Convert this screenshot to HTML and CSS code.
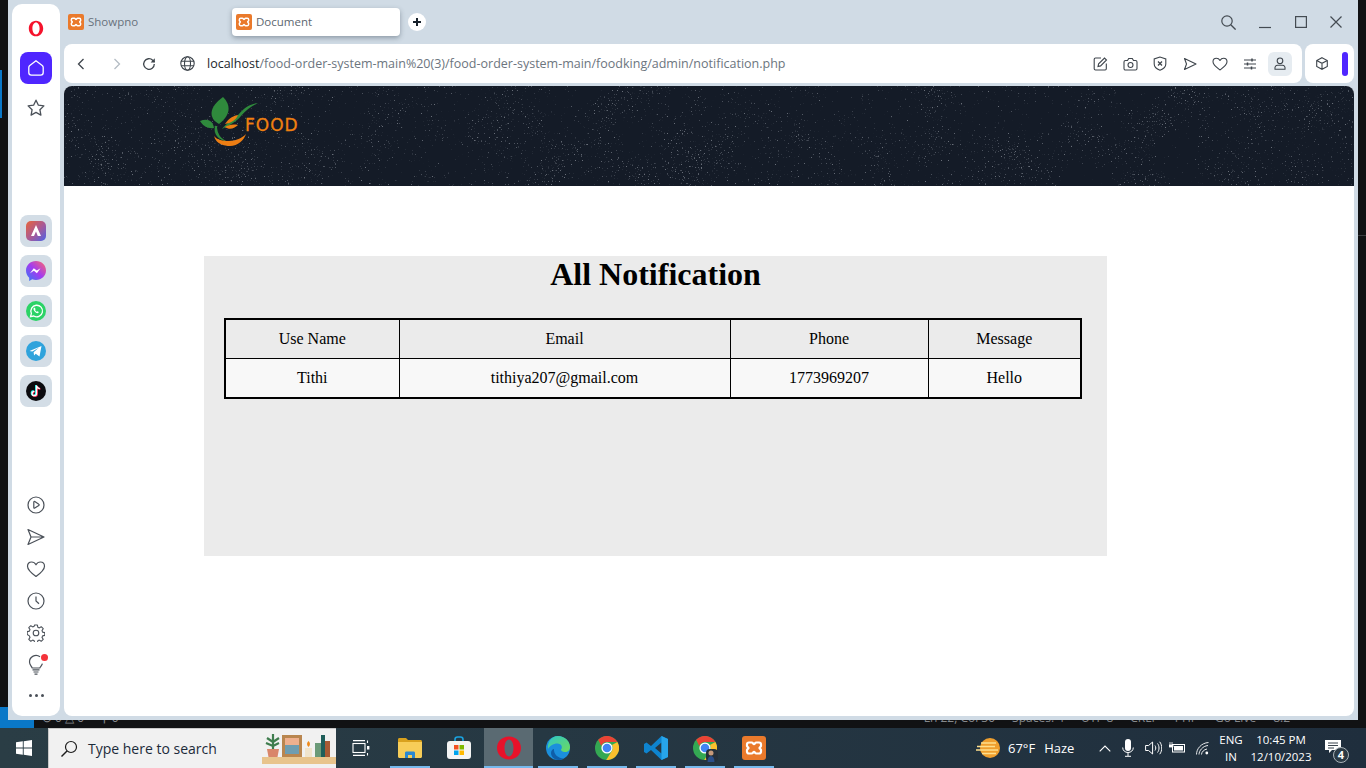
FILE: index.html
```html
<!DOCTYPE html>
<html lang="en">
<head>
    <meta charset="UTF-8">
    <meta name="viewport" content="width=device-width, initial-scale=1.0">
    <title>Document</title>
    <link rel="stylesheet" href="styles.css">
</head>
<body>
    <svg class="defs" width="0" height="0">
        <symbol id="xampp" viewBox="0 0 24 24">
            <rect width="24" height="24" rx="3" fill="#ea7a2c"/>
            <path d="M7 6.500h2.600c1.400 0 1.600 1.600 2.400 1.600s1-1.600 2.400-1.600H17c1.200 0 2 .8 2 2v1.400c0 1.100-1.500 1.300-1.500 2.100s1.500 1 1.500 2.100v1.400c0 1.200-.8 2-2 2h-2.600c-1.400 0-1.600-1.600-2.400-1.600s-1 1.600-2.400 1.600H7c-1.200 0-2-.8-2-2v-1.400c0-1.100 1.500-1.300 1.500-2.100S5 11 5 9.900V8.500c0-1.200.8-2 2-2z" fill="none" stroke="#fff" stroke-width="2.200"/>
        </symbol>
        <symbol id="chrome" viewBox="0 0 24 24">
            <circle cx="12" cy="12" r="12" fill="#34a853"/>
            <path d="M3.200 3.800A12 12 0 0 1 22.400 6H12a6 6 0 0 0-5.700 4z" fill="#ea4335"/>
            <path d="M22.400 6A12 12 0 0 1 11.200 24l5.300-8.500A6 6 0 0 0 17 9z" fill="#fbc02d"/>
            <circle cx="12" cy="12" r="5.600" fill="#fff"/>
            <circle cx="12" cy="12" r="4.300" fill="#4285f4"/>
        </symbol>
        <filter id="speckle" x="0" y="0" width="100%" height="100%">
            <feTurbulence type="fractalNoise" baseFrequency="0.7" numOctaves="2" seed="7" result="fine"/>
            <feTurbulence type="fractalNoise" baseFrequency="0.02" numOctaves="2" seed="3" result="patch"/>
            <feComposite in="fine" in2="patch" operator="arithmetic" k1="0.5" k2="0.7" k3="0" k4="0"/>
            <feColorMatrix type="matrix" values="0 0 0 0 0.78  0 0 0 0 0.82  0 0 0 0 0.88  8 0 0 0 -4.8"/>
        </filter>
    </svg>

    <div class="desktop">
        <div class="edge edge-left"></div>

        <div class="browser">
            <aside class="sidebar">
                <div class="side-item">
                    <svg width="16" height="17" viewBox="0 0 24 26"><path fill-rule="evenodd" d="M12 1C5.500 1 1 6.500 1 13s4.500 12 11 12 11-5.500 11-12S18.500 1 12 1zm0 3c3 0 5.500 4 5.500 9s-2.500 9-5.500 9-5.500-4-5.500-9S9 4 12 4z" fill="#f5132c"/></svg>
                </div>
                <div class="side-item side-home">
                    <svg width="18" height="18" viewBox="0 0 18 18"><path d="M9 1.800 2.800 6.400c-.8.600-1 1-1 2v5.200c0 1.700 1 2.600 2.600 2.600h9.200c1.600 0 2.600-.9 2.600-2.600V8.400c0-1-.2-1.400-1-2z" fill="none" stroke="#fff" stroke-width="1.300"/></svg>
                </div>
                <div class="side-item">
                    <svg width="20" height="20" viewBox="0 0 20 20"><path d="M10 2.200l2.400 5 5.500.7-4 3.800 1 5.400-4.900-2.700-4.900 2.700 1-5.400-4-3.800 5.500-.7z" fill="none" stroke="#4a5058" stroke-width="1.300" stroke-linejoin="round"/></svg>
                </div>

                <div class="side-apps">
                    <div class="app-tile">
                        <svg width="20" height="20" viewBox="0 0 20 20"><defs><linearGradient id="aria" x1="0" y1="0" x2="1" y2="1"><stop offset="0" stop-color="#e8643a"/><stop offset=".55" stop-color="#a65a9a"/><stop offset="1" stop-color="#4a63e8"/></linearGradient></defs><rect width="20" height="20" rx="5" fill="url(#aria)"/><path d="M10 4 5 15h3l2-4.500 1.800 4.500H15z" fill="#fff"/></svg>
                    </div>
                    <div class="app-tile">
                        <svg width="20" height="20" viewBox="0 0 20 20"><defs><linearGradient id="msgr" x1="0" y1="1" x2="1" y2="0"><stop offset="0" stop-color="#2f7bf6"/><stop offset=".5" stop-color="#a33bf0"/><stop offset="1" stop-color="#ff6a6a"/></linearGradient></defs><path d="M10 0C4.400 0 0 4.100 0 9.600c0 2.900 1.200 5.400 3.200 7.100V20l3-1.700c1.200.4 2.500.6 3.800.6 5.600 0 10-4 10-9.400S15.600 0 10 0z" fill="url(#msgr)"/><path d="m4 12.300 3.800-5.100 3 2.400 3.700-2.400-3.600 5-3-2.400z" fill="#fff"/></svg>
                    </div>
                    <div class="app-tile">
                        <svg width="20" height="20" viewBox="0 0 20 20"><circle cx="10" cy="10" r="10" fill="#2bd366"/><path d="M4.500 15.600l.9-3.200A5.800 5.800 0 1 1 7.700 15z" fill="none" stroke="#fff" stroke-width="1.300"/><path d="M8 6.800c-.8.600-.7 2 .5 3.500s2.700 2.300 3.700 1.800l.6-1-1.400-.9-.6.500c-.7-.2-1.500-1.100-1.700-1.800l.5-.6-.7-1.500z" fill="#fff"/></svg>
                    </div>
                    <div class="app-tile">
                        <svg width="20" height="20" viewBox="0 0 20 20"><circle cx="10" cy="10" r="10" fill="#2fa3dc"/><path d="M3.500 10 15.500 5l-2 10.500-3.800-2.800-1.600 1.800-.5-3.200 5.200-4.500-6.500 3.800z" fill="#fff"/></svg>
                    </div>
                    <div class="app-tile">
                        <svg width="20" height="20" viewBox="0 0 20 20"><circle cx="10" cy="10" r="10" fill="#0b0b0f"/><path d="M10.500 4.500v8a2.200 2.200 0 1 1-2.200-2.200M10.500 4.500c.2 1.800 1.500 3 3.300 3.100" fill="none" stroke="#25f4ee" stroke-width="1.700" transform="translate(-.6 -.4)"/><path d="M10.500 4.500v8a2.200 2.200 0 1 1-2.200-2.200M10.500 4.500c.2 1.800 1.500 3 3.300 3.100" fill="none" stroke="#fe2c55" stroke-width="1.700" transform="translate(.6 .4)"/><path d="M10.500 4.500v8a2.200 2.200 0 1 1-2.200-2.200M10.500 4.500c.2 1.800 1.500 3 3.300 3.100" fill="none" stroke="#fff" stroke-width="1.300"/></svg>
                    </div>
                </div>

                <div class="side-tools">
                    <div class="tool">
                        <svg width="18" height="18" viewBox="0 0 18 18"><circle cx="9" cy="9" r="8" fill="none" stroke="#4a5058" stroke-width="1.200"/><path d="M6.800 6.200c0-.6.500-.9 1-.6l4 2.600c.5.300.5 1 0 1.300l-4 2.600c-.5.300-1 0-1-.6z" fill="none" stroke="#4a5058" stroke-width="1.200"/></svg>
                    </div>
                    <div class="tool">
                        <svg width="20" height="18" viewBox="0 0 20 18"><path d="M2 1.500 18 9 2 16.500 5 9zM5 9h13" fill="none" stroke="#4a5058" stroke-width="1.200" stroke-linejoin="round"/></svg>
                    </div>
                    <div class="tool">
                        <svg width="20" height="18" viewBox="0 0 20 18"><path d="M10 16.500C5 12.800 1.500 10 1.500 6.200 1.500 3.600 3.400 2 5.600 2 7.400 2 9 3 10 4.800 11 3 12.600 2 14.400 2c2.200 0 4.100 1.600 4.100 4.200 0 3.800-3.500 6.600-8.500 10.300z" fill="none" stroke="#4a5058" stroke-width="1.200" stroke-linejoin="round"/></svg>
                    </div>
                    <div class="tool">
                        <svg width="18" height="18" viewBox="0 0 18 18"><circle cx="9" cy="9" r="8" fill="none" stroke="#4a5058" stroke-width="1.200"/><path d="M9 4.500V9l3 2.800" fill="none" stroke="#4a5058" stroke-width="1.200"/></svg>
                    </div>
                    <div class="tool">
                        <svg width="18" height="18" viewBox="0 0 18 18"><path d="M7.600 1h2.800l.4 2.200 1.500.7 1.900-1.200 2 2-1.200 1.900.6 1.500 2.200.5v2.800l-2.200.5-.6 1.500 1.200 1.900-2 2-1.900-1.200-1.500.7-.4 2.200H7.600l-.4-2.200-1.500-.7-1.900 1.200-2-2 1.200-1.900-.6-1.500L.2 10.400V7.600l2.200-.5.600-1.500-1.200-1.900 2-2 1.900 1.200 1.500-.7z" fill="none" stroke="#4a5058" stroke-width="1.100" stroke-linejoin="round"/><circle cx="9" cy="9" r="2.800" fill="none" stroke="#4a5058" stroke-width="1.100"/></svg>
                    </div>
                    <div class="tool tool-tip">
                        <svg width="18" height="22" viewBox="0 0 18 22"><path d="M13 2.800A6.500 6.500 0 0 0 2.500 8c0 2.700 1.800 4 2.700 6h7.600c.7-1.400 2.200-2.600 2.600-4.300M5.500 15.800h7M6.500 18h5M7.500 20.200h3" fill="none" stroke="#4a5058" stroke-width="1.200"/></svg>
                        <span class="tip-dot"></span>
                    </div>
                    <div class="tool tool-dots"><span></span><span></span><span></span></div>
                </div>
            </aside>

            <div class="main">
                <div class="tabbar">
                    <div class="tab">
                        <svg width="16" height="16"><use href="#xampp"/></svg>
                        <span>Showpno</span>
                    </div>
                    <div class="tab tab-active">
                        <svg width="16" height="16"><use href="#xampp"/></svg>
                        <span>Document</span>
                    </div>
                    <div class="tab-add">
                        <svg width="10" height="10" viewBox="0 0 10 10"><path d="M5 1v8M1 5h8" stroke="#16202a" stroke-width="2"/></svg>
                    </div>
                    <div class="win-controls">
                        <svg width="15" height="15" viewBox="0 0 15 15"><circle cx="6" cy="6" r="5.200" fill="none" stroke="#444b52" stroke-width="1.200"/><path d="m9.800 9.800 4.800 4.800" stroke="#444b52" stroke-width="1.300"/></svg>
                        <svg width="12" height="14" viewBox="0 0 12 14"><path d="M0 12.500h12" stroke="#444b52" stroke-width="1.200"/></svg>
                        <svg width="12" height="12" viewBox="0 0 12 12"><rect x=".6" y=".6" width="10.800" height="10.800" fill="none" stroke="#444b52" stroke-width="1.200"/></svg>
                        <svg width="12" height="12" viewBox="0 0 12 12"><path d="m.5.500 11 11m0-11-11 11" stroke="#444b52" stroke-width="1.200"/></svg>
                    </div>
                </div>

                <div class="toolbar">
                    <div class="addressbar">
                        <svg class="nav-back" width="8" height="12" viewBox="0 0 8 12"><path d="M6.500 1 1.500 6l5 5" fill="none" stroke="#3e454c" stroke-width="1.300"/></svg>
                        <svg class="nav-forward" width="8" height="12" viewBox="0 0 8 12"><path d="m1.500 1 5 5-5 5" fill="none" stroke="#b4bcc4" stroke-width="1.300"/></svg>
                        <svg class="nav-reload" width="14" height="14" viewBox="0 0 14 14"><path d="M12.300 7A5.300 5.300 0 1 1 10.700 3.200L12.500 5" fill="none" stroke="#3e454c" stroke-width="1.300"/><path d="M12.800 1.200v4.200H8.600z" fill="#3e454c"/></svg>
                        <svg class="nav-globe" width="15" height="15" viewBox="0 0 15 15"><circle cx="7.500" cy="7.500" r="6.700" fill="none" stroke="#3e454c" stroke-width="1.100"/><ellipse cx="7.500" cy="7.500" rx="3" ry="6.700" fill="none" stroke="#3e454c" stroke-width="1.100"/><path d="M1 5.300h13M1 9.700h13" stroke="#3e454c" stroke-width="1.100"/></svg>
                        <div class="url"><span class="url-host">localhost</span>/food-order-system-main%20(3)/food-order-system-main/foodking/admin/notification.php</div>
                        <div class="bar-icons">
                            <div class="bar-icon"><svg width="15" height="15" viewBox="0 0 15 15"><path d="M8 2H2.500C1.700 2 1.200 2.500 1.200 3.200v9.600c0 .8.500 1.200 1.300 1.200h9.600c.7 0 1.200-.5 1.200-1.200V7.500" fill="none" stroke="#3e454c" stroke-width="1.100"/><path d="m5 10.500.6-2.600L11.500 2l2 2-5.900 5.900z" fill="none" stroke="#3e454c" stroke-width="1.100"/></svg></div>
                            <div class="bar-icon"><svg width="15" height="14" viewBox="0 0 15 14"><path d="M1 5c0-1 .6-1.500 1.500-1.500h2L5.700 1.500h3.600l1.200 2h2c.9 0 1.500.5 1.500 1.500v6.500c0 1-.6 1.500-1.500 1.500h-10C1.600 13 1 12.500 1 11.500z" fill="none" stroke="#3e454c" stroke-width="1.100"/><circle cx="7.500" cy="8" r="2.500" fill="none" stroke="#3e454c" stroke-width="1.100"/></svg></div>
                            <div class="bar-icon"><svg width="14" height="15" viewBox="0 0 14 15"><path d="M7 1 1.200 3v5c0 3 2.500 5 5.800 6.200C10.300 13 12.800 11 12.800 8V3z" fill="none" stroke="#3e454c" stroke-width="1.100"/><path d="m5 5.500 4 4m0-4-4 4" stroke="#3e454c" stroke-width="1.300"/></svg></div>
                            <div class="bar-icon"><svg width="14" height="14" viewBox="0 0 14 14"><path d="M1.500 1.500 13 7 1.500 12.500 3.500 7z" fill="none" stroke="#3e454c" stroke-width="1.100" stroke-linejoin="round"/></svg></div>
                            <div class="bar-icon"><svg width="16" height="14" viewBox="0 0 16 14"><path d="M8 13C4 10 1 8 1 4.800 1 2.600 2.600 1.200 4.400 1.200 5.800 1.200 7.200 2 8 3.400 8.800 2 10.200 1.200 11.600 1.200 13.400 1.200 15 2.600 15 4.800 15 8 12 10 8 13z" fill="none" stroke="#3e454c" stroke-width="1.100" stroke-linejoin="round"/></svg></div>
                            <div class="bar-icon"><svg width="14" height="12" viewBox="0 0 14 12"><path d="M1 2h12M1 6h12M1 10h12" stroke="#3e454c" stroke-width="1.100"/><path d="M9 .5v3M4.500 4.500v3M8.500 8.500v3" stroke="#3e454c" stroke-width="1.500"/></svg></div>
                            <div class="bar-icon bar-profile"><svg width="12" height="13" viewBox="0 0 12 13"><circle cx="6" cy="3.800" r="2.800" fill="none" stroke="#3e454c" stroke-width="1.100"/><path d="M1 12.300c-.4-2.700.8-4 2.600-4h4.800c1.800 0 3 1.300 2.600 4z" fill="none" stroke="#3e454c" stroke-width="1.100"/></svg></div>
                        </div>
                    </div>
                    <div class="extbar">
                        <svg width="12" height="13" viewBox="0 0 12 13"><path d="M6 .7 11.300 3.500v6L6 12.300.7 9.500v-6zM.7 3.500 6 6.300l5.300-2.800M6 6.300v6" fill="none" stroke="#3e454c" stroke-width="1.100"/></svg>
                        <span class="ext-pill"></span>
                    </div>
                </div>

                <div class="page">
                    <header class="site-header">
                        <svg class="header-texture" width="1290" height="100"><rect width="1290" height="100" filter="url(#speckle)"/></svg>
                        <div class="logo">
                            <svg width="60" height="52" viewBox="0 0 60 52">
                                <path d="M23 1C31 9 31 19 19 28C8 22 9 11 23 1z" fill="#2f8a3c"/>
                                <path d="M0 25C7 22 13 24 14 32C8 33 3 30 0 25z" fill="#2f8a3c"/>
                                <path d="M58 7C50 8 44 12 39 18C34 24 26 27 22 33C28 30 36 26 41 20C46 14 52 10 58 7z" fill="#2f8a3c"/>
                                <path d="M38 19C31 20 27 25 25 28C31 27 36 24 38 19z" fill="#ec7d13"/>
                                <path d="M38 29C33 28 28 29 25 31C29 34 34 33 38 29z" fill="#ec7d13"/>
                                <path d="M15 30C13 38 18 44 28 46C21 43 17 38 17 30z" fill="#2f8a3c"/>
                                <path d="M14 40C16 48 24 50 30 50C38 50 44 44 46 38C42 42 36 45 29 45C23 45 17 44 14 40z" fill="#ec7d13"/>
                            </svg>
                            <span class="logo-text">FOOD</span>
                        </div>
                    </header>

                    <section class="content">
                        <div class="panel">
                            <h1>All Notification</h1>
                            <table class="notify-table">
                                <tr class="head-row">
                                    <td class="col-name">Use Name</td>
                                    <td class="col-email">Email</td>
                                    <td class="col-phone">Phone</td>
                                    <td class="col-msg">Message</td>
                                </tr>
                                <tr class="data-row">
                                    <td>Tithi</td>
                                    <td>tithiya207@gmail.com</td>
                                    <td>1773969207</td>
                                    <td>Hello</td>
                                </tr>
                            </table>
                        </div>
                    </section>
                </div>
            </div>
        </div>

        <div class="edge edge-right"></div>
    </div>

    <div class="statusbar">
        <div class="status-blue"></div>
        <div class="status-left">⊙ 0 △ 0 &nbsp;&nbsp;&nbsp; ⚲ 0</div>
        <div class="status-right">
            <span>Ln 22, Col 30</span>
            <span>Spaces: 4</span>
            <span>UTF-8</span>
            <span>CRLF</span>
            <span>PHP</span>
            <span>Go Live</span>
            <span>8.2</span>
        </div>
    </div>

    <footer class="taskbar">
        <div class="start">
            <svg width="16" height="16" viewBox="0 0 16 16"><path d="M0 2.300 6.800 1.300v6.200H0zM7.700 1.200 16 0v7.500H7.700zM0 8.400h6.800v6.300L0 13.700zM7.700 8.400H16V16l-8.300-1.200z" fill="#fff"/></svg>
        </div>
        <div class="search">
            <svg width="18" height="18" viewBox="0 0 18 18"><circle cx="11" cy="7" r="5.500" fill="none" stroke="#1b1b1b" stroke-width="1.200"/><path d="M7 11 1.500 16.500" stroke="#1b1b1b" stroke-width="1.400"/></svg>
            <span class="search-text">Type here to search</span>
            <svg class="search-art" width="74" height="32" viewBox="0 0 74 32">
                <rect y="25" width="74" height="7" fill="#e8c48c"/>
                <path d="M5 17h12l-1.500 8h-9z" fill="#d9866a"/>
                <path d="M11 17V2M11 10 5 6M11 10l6-4M11 14 4 11M11 14l6-3" stroke="#3f7d4e" stroke-width="2.200" fill="none"/>
                <rect x="20" y="3" width="20" height="22" fill="#b9864f"/>
                <rect x="23" y="6" width="14" height="16" fill="#6f9db0"/>
                <path d="M23 6h14v7H23z" fill="#efb08e"/>
                <rect x="43" y="16" width="7" height="9" fill="#f0e4cc"/>
                <path d="M46.500 9c2 2 2 4 0 6-2-2-2-4 0-6z" fill="#ee8a1c"/>
                <rect x="53" y="11" width="6" height="14" fill="#6b9a78"/>
                <rect x="59" y="3" width="4" height="22" fill="#1f5e5a"/>
                <rect x="63" y="9" width="5" height="16" fill="#a85a34"/>
            </svg>
        </div>
        <div class="task-btn">
            <svg width="18" height="16" viewBox="0 0 18 16"><path d="M1 .6h12M1 15.400h12" stroke="#fff" stroke-width="1.100"/><rect x="1" y="3.500" width="12" height="9" fill="none" stroke="#fff" stroke-width="1.100"/><path d="M15.500 .5v2.500M15.500 13v2.500" stroke="#fff" stroke-width="1.100"/><rect x="15" y="6" width="2.400" height="3.500" fill="#fff"/></svg>
        </div>
        <div class="task-btn task-open">
            <svg width="24" height="20" viewBox="0 0 24 20"><path d="M0 1.500C0 .7.500 0 1.500 0H8l2 2h12.500c.9 0 1.500.6 1.500 1.500V5H0z" fill="#d9a11d"/><path d="M0 4h24v14.500c0 .9-.6 1.500-1.500 1.500h-21C.6 20 0 19.400 0 18.500z" fill="#f7cd58"/><path d="M7 20v-5c0-1 .6-1.500 1.500-1.500h7c.9 0 1.500.5 1.500 1.500v5h-3v-3h-4v3z" fill="#2a87d0"/></svg>
        </div>
        <div class="task-btn task-store">
            <svg width="24" height="24" viewBox="0 0 24 24"><path d="M8 6V3.500C8 2 9 1 10.500 1h3C15 1 16 2 16 3.500V6" fill="none" stroke="#1aa3e0" stroke-width="1.600"/><rect y="5" width="24" height="18" rx="3" fill="#f4f4f4"/><rect x="7" y="9" width="4.500" height="4.500" fill="#f25022"/><rect x="12.500" y="9" width="4.500" height="4.500" fill="#7fba00"/><rect x="7" y="14.500" width="4.500" height="4.500" fill="#00a4ef"/><rect x="12.500" y="14.500" width="4.500" height="4.500" fill="#ffb900"/></svg>
        </div>
        <div class="task-btn task-open task-active">
            <svg width="24" height="24" viewBox="0 0 24 24"><path fill-rule="evenodd" d="M12 .5C5 .5 0 5.600 0 12s5 11.500 12 11.500S24 18.400 24 12 19 .5 12 .5zm0 3c2.600 0 4.500 3.800 4.500 8.500s-1.900 8.500-4.500 8.500S7.500 16.700 7.500 12 9.400 3.500 12 3.500z" fill="#e8122a"/></svg>
        </div>
        <div class="task-btn task-open">
            <svg width="24" height="24" viewBox="0 0 24 24"><defs><linearGradient id="edge-a" x1="0" y1="0" x2="1" y2="1"><stop offset="0" stop-color="#2ec6c6"/><stop offset="1" stop-color="#6edb5c"/></linearGradient></defs><circle cx="12" cy="12" r="12" fill="#1b8fdc"/><path d="M12 0c6.500 0 12 5 12 11 0 3-2 5-5 5-2.500 0-4-1-4-2.500 2-2 .5-6-3.500-6C7 7.500 3.500 10 2 13 1 7 5 0 12 0z" fill="url(#edge-a)"/><path d="M8 13c-.5 5 3.500 9 9.500 9.500C15.500 23.500 13.800 24 12 24 9 24 5 21 5 17c0-2 1.500-4 3-4z" fill="#0f5ea8"/></svg>
        </div>
        <div class="task-btn task-open">
            <svg width="24" height="24"><use href="#chrome"/></svg>
        </div>
        <div class="task-btn task-open">
            <svg width="24" height="24" viewBox="0 0 24 24"><path d="M17.500 0 24 3v18l-6.500 3L7 14l-4.500 3.500L0 16v-8l2.500-1.500L7 10zM17.500 6.500 11 12l6.500 5.500z" fill="#0e84cf" fill-rule="evenodd"/><path d="M17.500 0 24 3v18l-6.500 3z" fill="#27a5ea"/></svg>
        </div>
        <div class="task-btn task-open">
            <svg width="24" height="24"><use href="#chrome"/></svg>
            <svg class="avatar" width="12" height="13" viewBox="0 0 12 13"><rect width="12" height="13" rx="4" fill="#25303a"/><circle cx="5" cy="4" r="2.500" fill="#c89a7a"/><path d="M1.500 13c0-4 1.500-6 3.500-6s3.500 2 3.500 6z" fill="#2b4f8a"/></svg>
        </div>
        <div class="task-btn task-open">
            <svg width="24" height="24"><use href="#xampp"/></svg>
        </div>

        <div class="tray">
            <div class="weather">
                <svg width="24" height="22" viewBox="0 0 24 22"><circle cx="14" cy="11" r="10" fill="#ef9f2e"/><path d="M5 6h15M1 9.500h18M0 13h22M6 16.500h14" stroke="#ffdf8c" stroke-width="1.600"/></svg>
                <span class="weather-temp">67°F</span>
                <span class="weather-text">Haze</span>
            </div>
            <svg class="tray-chevron" width="12" height="7" viewBox="0 0 12 7"><path d="m.7 6.300 5.300-5.300 5.300 5.300" fill="none" stroke="#fff" stroke-width="1.100"/></svg>
            <svg class="tray-mic" width="12" height="18" viewBox="0 0 12 18"><rect x="3" y="0" width="6" height="12" rx="3" fill="#fff"/><path d="M.7 8.500c0 3 2.300 5 5.300 5s5.300-2 5.300-5M6 13.500V17M3 17.300h6" fill="none" stroke="#fff" stroke-width="1"/></svg>
            <svg class="tray-speaker" width="17" height="14" viewBox="0 0 17 14"><path d="M.6 4.500h3l4-3.500v12l-4-3.500h-3z" fill="none" stroke="#fff" stroke-width="1"/><path d="M10 4.500c1 1.500 1 3.500 0 5M12.500 2.500c2 2.500 2 6.500 0 9M14.700.8c2.700 3.500 2.700 9 0 12.400" fill="none" stroke="#fff" stroke-width="1"/></svg>
            <svg class="tray-battery" width="16" height="12" viewBox="0 0 16 12"><rect x="3.500" y="2.500" width="12" height="7.500" fill="none" stroke="#fff" stroke-width="1"/><rect x="5" y="4" width="9" height="4.500" fill="#fff"/><path d="M1 0v3M3 0v3M0 3h4v2H0z" stroke="#fff" stroke-width=".8" fill="#fff"/></svg>
            <svg class="tray-wifi" width="13" height="13" viewBox="0 0 13 13"><path d="M.5 12.500C.5 7 5 1 12.500 .5M3 12.500C3 9 6.500 4 12 3.500M5.500 12.500C5.500 10 8 7.500 11 7" fill="none" stroke="#fff" stroke-width=".9"/><circle cx="10.800" cy="11" r="1.400" fill="#fff"/></svg>
            <div class="lang"><span>ENG</span><span>IN</span></div>
            <div class="clock"><span>10:45 PM</span><span>12/10/2023</span></div>
            <div class="notify">
                <svg width="16" height="13" viewBox="0 0 16 13"><path d="M0 0h16v10H7l-3 3v-3H0z" fill="#fff"/><path d="M3 3h10M3 5.500h10M3 8h6" stroke="#25303a" stroke-width=".9"/></svg>
                <span class="notify-badge">4</span>
            </div>
        </div>
    </footer>
</body>
</html>
```

FILE: styles.css
```css
* {
    box-sizing: border-box;
}

html, body {
    margin: 0;
    padding: 0;
}

body {
    width: 1366px;
    height: 768px;
    overflow: hidden;
    background-color: #111214;
    font-family: "Open Sans", "Noto Sans", sans-serif;
    display: flex;
    flex-direction: column;
}

.defs {
    display: block;
    height: 0;
}

svg {
    display: block;
    flex-shrink: 0;
}

/* desktop and browser window */
.desktop {
    display: flex;
    height: 720px;
}

.edge {
    width: 8px;
    flex-shrink: 0;
}

.edge-left {
    background:
        linear-gradient(#0a78c8, #0a78c8) 0 70px / 2px 48px no-repeat,
        linear-gradient(#0a78c8, #0a78c8) 0 707px / 8px 13px no-repeat,
        #101113;
}

.edge-right {
    background:
        linear-gradient(#3a3d40, #3a3d40) 0 235px / 8px 1px no-repeat,
        #101113;
}

.browser {
    flex: 1;
    display: flex;
    gap: 4px;
    padding: 4px;
    background: #d0dbe5;
    min-width: 0;
}

/* sidebar */
.sidebar {
    width: 48px;
    flex-shrink: 0;
    background: #fff;
    border-radius: 10px;
    padding: 8px 8px 7px;
    display: flex;
    flex-direction: column;
    align-items: center;
    gap: 8px;
}

.side-item {
    width: 32px;
    height: 32px;
    display: flex;
    align-items: center;
    justify-content: center;
}

.side-home {
    background: #4f26ff;
    border-radius: 8px;
}

.side-apps {
    margin-top: 83px;
    display: flex;
    flex-direction: column;
    gap: 8px;
}

.app-tile {
    width: 32px;
    height: 32px;
    border-radius: 8px;
    background: #d3dde6;
    display: flex;
    align-items: center;
    justify-content: center;
}

.side-tools {
    margin-top: auto;
    display: flex;
    flex-direction: column;
}

.tool {
    width: 32px;
    height: 32px;
    display: flex;
    align-items: center;
    justify-content: center;
}

.tool-tip {
    position: relative;
}

.tip-dot {
    position: absolute;
    top: 5px;
    left: 21px;
    width: 7px;
    height: 7px;
    border-radius: 50%;
    background: #f4333a;
}

.tool-dots {
    height: 28px;
    gap: 3px;
}

.tool-dots span {
    width: 3px;
    height: 3px;
    border-radius: 50%;
    background: #4a5058;
}

/* tabs */
.main {
    flex: 1;
    min-width: 0;
    display: flex;
    flex-direction: column;
}

.tabbar {
    height: 40px;
    flex-shrink: 0;
    display: flex;
    align-items: center;
    padding: 0 0 4px 4px;
}

.tab {
    width: 164px;
    height: 28px;
    display: flex;
    align-items: center;
    gap: 4px;
    font-size: 11.5px;
    color: #68727c;
}

.tab span {
    padding-bottom: 1px;
}

.tab-active {
    width: 168px;
    padding-left: 4px;
    background: #fff;
    border-radius: 4px;
    box-shadow: 0 2px 5px rgba(60, 75, 90, 0.45);
    color: #5c666f;
}

.tab-add {
    width: 18px;
    height: 18px;
    margin-left: 8px;
    border-radius: 50%;
    background: #fff;
    display: flex;
    align-items: center;
    justify-content: center;
}

.win-controls {
    margin-left: auto;
    width: 121px;
    margin-right: 12px;
    display: flex;
    align-items: center;
    justify-content: space-between;
}

/* address bar */
.toolbar {
    height: 39px;
    flex-shrink: 0;
    display: flex;
    gap: 3px;
}

.addressbar {
    flex: 1;
    min-width: 0;
    background: #fff;
    border-radius: 8px;
    display: flex;
    align-items: center;
    padding-left: 13px;
}

.nav-forward {
    margin-left: 28px;
}

.nav-reload {
    margin-left: 21px;
}

.nav-globe {
    margin-left: 24px;
}

.url {
    margin-left: 12px;
    font-size: 12.5px;
    color: #6c757e;
    white-space: nowrap;
}

.url-host {
    color: #22272c;
}

.bar-icons {
    margin-left: auto;
    margin-right: 10px;
    display: flex;
    align-items: center;
    gap: 6px;
}

.bar-icon {
    width: 24px;
    height: 24px;
    border-radius: 6px;
    display: flex;
    align-items: center;
    justify-content: center;
}

.bar-profile {
    background: #e6ecf1;
}

.extbar {
    width: 49px;
    flex-shrink: 0;
    background: #fff;
    border-radius: 8px;
    display: flex;
    align-items: center;
    padding-left: 11px;
    gap: 14px;
}

.ext-pill {
    width: 6px;
    height: 24px;
    border-radius: 3px;
    background: #4f26ff;
}

/* the page in the browser */
.page {
    flex: 1;
    margin-top: 3px;
    background: #fff;
    border-radius: 8px;
    overflow: hidden;
    min-height: 0;
}

.site-header {
    position: relative;
    height: 100px;
    padding: 10px 0 0 136px;
    background-color: #141b27;
}

.header-texture {
    position: absolute;
    top: 0;
    left: 0;
    opacity: 0.4;
}

.logo {
    position: relative;
    display: flex;
    align-items: flex-start;
}

.logo-text {
    margin: 19px 0 0 -15px;
    font-family: "DejaVu Sans", sans-serif;
    font-size: 17px;
    line-height: 20px;
    color: #f08010;
    letter-spacing: 1px;
    -webkit-text-stroke: 0.3px #f08010;
}

.content {
    padding: 70px 0 0 140px;
}

.panel {
    width: 903px;
    height: 300px;
    background: #ebebeb;
    padding: 0 20px;
    font-family: "Liberation Serif", "Times New Roman", serif;
    color: #000;
}

.panel h1 {
    margin: 0 0 25px;
    font-size: 32px;
    line-height: 37px;
    text-align: center;
}

.notify-table {
    width: 858px;
    height: 81px;
    border-collapse: collapse;
    border: 2px solid #000;
    font-size: 16px;
    text-align: center;
    table-layout: fixed;
}

.notify-table td {
    border: 1px solid #000;
    padding: 0;
}

.col-name {
    width: 174px;
}

.col-email {
    width: 331px;
}

.col-phone {
    width: 198px;
}

.head-row {
    background: #ebebeb;
}

.data-row {
    background: #f8f8f8;
}

/* strip of the editor behind the browser */
.statusbar {
    height: 8px;
    flex-shrink: 0;
    overflow: hidden;
    display: flex;
    background: #111214;
    font-size: 12px;
    line-height: 12px;
    color: #85888c;
}

.status-blue {
    width: 34px;
    background: #0a78c8;
}

.status-left {
    margin: -8px 0 0 8px;
    white-space: nowrap;
}

.status-right {
    margin: -8px 0 0 auto;
    padding-right: 76px;
    display: flex;
    gap: 17px;
    white-space: nowrap;
}

/* windows taskbar */
.taskbar {
    height: 40px;
    flex-shrink: 0;
    display: flex;
    background: linear-gradient(90deg, #2a3d45, #263843 40%, #1f2e3d);
    color: #fff;
}

.start {
    width: 48px;
    display: flex;
    align-items: center;
    justify-content: center;
}

.search {
    width: 288px;
    background: #f1f1f1;
    border-top: 1px solid #c8c8c8;
    border-left: 1px solid #c8c8c8;
    display: flex;
    align-items: center;
    padding-left: 11px;
    color: #1c2b3a;
    position: relative;
    overflow: hidden;
}

.search-text {
    margin-left: 10px;
    font-size: 14px;
}

.search-art {
    position: absolute;
    right: 0;
    bottom: 4px;
}

.task-btn {
    width: 49px;
    height: 40px;
    display: flex;
    align-items: center;
    justify-content: center;
    position: relative;
}

.task-store {
    margin-right: 1px;
}

.task-open::after {
    content: "";
    position: absolute;
    left: 5px;
    right: 4px;
    bottom: 0;
    height: 2px;
    background: #76b9ed;
}

.task-active {
    background: #5a6a72;
}

.task-active::after {
    left: 0;
    right: 0;
}

.avatar {
    position: absolute;
    left: 26px;
    top: 21px;
}

.tray {
    margin-left: auto;
    margin-right: 9px;
    display: flex;
    align-items: center;
    font-size: 13px;
}

.weather {
    display: flex;
    align-items: center;
    width: 123px;
}

.weather-temp {
    margin-left: 8px;
}

.weather-text {
    margin-left: 9px;
}

.tray-mic {
    margin-left: 11px;
}

.tray-speaker {
    margin-left: 10.5px;
}

.tray-battery {
    margin-left: 7.5px;
}

.tray-wifi {
    margin-left: 10.5px;
}

.lang {
    margin-left: 7.5px;
    width: 30px;
    display: flex;
    flex-direction: column;
    align-items: center;
    font-size: 11.5px;
    line-height: 17px;
}

.clock {
    width: 56px;
    margin-left: 7px;
    display: flex;
    flex-direction: column;
    align-items: center;
    font-size: 11.5px;
    line-height: 17px;
    white-space: nowrap;
}

.notify {
    width: 48px;
    height: 40px;
    padding-bottom: 4px;
    display: flex;
    align-items: center;
    justify-content: center;
    position: relative;
}

.notify-badge {
    position: absolute;
    left: 24px;
    top: 19px;
    width: 16px;
    height: 16px;
    border-radius: 50%;
    border: 1px solid #aab2b8;
    background: #2b3a45;
    font-size: 11px;
    font-weight: 700;
    line-height: 14px;
    text-align: center;
}
```
